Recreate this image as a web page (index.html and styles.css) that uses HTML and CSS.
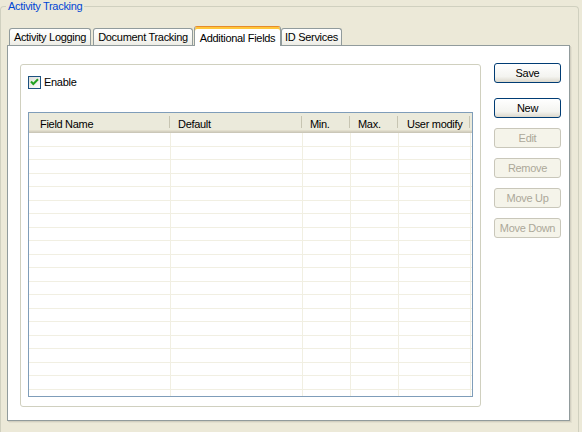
FILE: index.html
```html
<!DOCTYPE html>
<html>
<head>
<meta charset="utf-8">
<title>Activity Tracking</title>
<link rel="stylesheet" href="styles.css">
</head>
<body>
<div class="group">
  <span class="group-label">Activity Tracking</span>
  <div class="tabstrip">
    <div class="tab tab-al">Activity Logging</div>
    <div class="tab tab-dt">Document Tracking</div>
    <div class="tab tab-sel">Additional Fields</div>
    <div class="tab tab-id">ID Services</div>
  </div>
  <div class="panel">
    <div class="frame">
      <label class="check">
        <span class="box"><svg width="13" height="13" viewBox="0 0 13 13"><defs><linearGradient id="cb" x1="0" y1="0" x2="1" y2="1"><stop offset="0" stop-color="#DCDCD7"/><stop offset="1" stop-color="#FFFFFF"/></linearGradient></defs><rect x="0.5" y="0.5" width="12" height="12" fill="url(#cb)" stroke="#1C5180"/><polyline points="3,5.5 5.3,8 10,3.3" fill="none" stroke="#21A121" stroke-width="2"/></svg></span>
        <span>Enable</span>
      </label>
      <div class="list">
        <div class="lv-head">
          <div class="hc hc1">Field Name</div>
          <div class="hc">Default</div>
          <div class="hc">Min.</div>
          <div class="hc">Max.</div>
          <div class="hc hc5">User modify</div>
          <div class="hc-rest"></div>
        </div>
        <div class="lv-body">
          <div class="lv-row"><div></div><div></div><div></div><div></div><div></div><div></div></div>
          <div class="lv-row"><div></div><div></div><div></div><div></div><div></div><div></div></div>
          <div class="lv-row"><div></div><div></div><div></div><div></div><div></div><div></div></div>
          <div class="lv-row"><div></div><div></div><div></div><div></div><div></div><div></div></div>
          <div class="lv-row"><div></div><div></div><div></div><div></div><div></div><div></div></div>
          <div class="lv-row"><div></div><div></div><div></div><div></div><div></div><div></div></div>
          <div class="lv-row"><div></div><div></div><div></div><div></div><div></div><div></div></div>
          <div class="lv-row"><div></div><div></div><div></div><div></div><div></div><div></div></div>
          <div class="lv-row"><div></div><div></div><div></div><div></div><div></div><div></div></div>
          <div class="lv-row"><div></div><div></div><div></div><div></div><div></div><div></div></div>
          <div class="lv-row"><div></div><div></div><div></div><div></div><div></div><div></div></div>
          <div class="lv-row"><div></div><div></div><div></div><div></div><div></div><div></div></div>
          <div class="lv-row"><div></div><div></div><div></div><div></div><div></div><div></div></div>
          <div class="lv-row"><div></div><div></div><div></div><div></div><div></div><div></div></div>
          <div class="lv-row"><div></div><div></div><div></div><div></div><div></div><div></div></div>
          <div class="lv-row"><div></div><div></div><div></div><div></div><div></div><div></div></div>
          <div class="lv-row"><div></div><div></div><div></div><div></div><div></div><div></div></div>
          <div class="lv-row"><div></div><div></div><div></div><div></div><div></div><div></div></div>
          <div class="lv-row"><div></div><div></div><div></div><div></div><div></div><div></div></div>
          <div class="lv-row"><div></div><div></div><div></div><div></div><div></div><div></div></div>
          <div class="lv-row"><div></div><div></div><div></div><div></div><div></div><div></div></div>
        </div>
      </div>
    </div>
    <div class="buttons">
      <button class="btn btn-save">Save</button>
      <button class="btn btn-new">New</button>
      <button class="btn" disabled>Edit</button>
      <button class="btn" disabled>Remove</button>
      <button class="btn" disabled>Move Up</button>
      <button class="btn" disabled>Move Down</button>
    </div>
  </div>
</div>
</body>
</html>
```

FILE: styles.css
```css
* { box-sizing: border-box; }
html, body { margin: 0; padding: 0; }
body {
  width: 582px;
  height: 432px;
  overflow: hidden;
  background: #ECE9D8;
  font-family: "Liberation Sans", Arial, sans-serif;
  font-size: 11px;
  letter-spacing: -0.3px;
  color: #000;
}

.group {
  position: relative;
  margin-top: 6px;
  width: 579px;
  height: 440px;
  border: 1px solid #D0D0BF;
  border-bottom: none;
  border-radius: 4px 4px 0 0;
  padding-top: 19px;
}
.group-label {
  position: absolute;
  top: -7px;
  left: 5px;
  padding: 0 2px;
  background: #ECE9D8;
  color: #0046D5;
  line-height: 13px;
}

.tabstrip {
  display: flex;
  align-items: flex-end;
  height: 19px;
  padding-left: 8px;
  position: relative;
  z-index: 1;
}
.tab {
  height: 17px;
  border: 1px solid #919B9C;
  border-bottom: none;
  border-radius: 3px 3px 0 0;
  background: linear-gradient(#FFFFFF, #F7F7F3 60%, #EDECE5);
  text-align: center;
  line-height: 16px;
  white-space: nowrap;
}
.tab-al { width: 82px; }
.tab-dt { width: 100px; margin-left: 2px; }
.tab-sel {
  width: 87px;
  height: 20px;
  margin-left: 1px;
  margin-bottom: -1px;
  background: #FFFFFF;
  border-top: 1px solid #E68B2C;
  box-shadow: inset 0 2px 0 #FFC73C;
  padding-top: 3px;
}
.tab-id { width: 61px; }

.panel {
  margin-left: 6px;
  width: 563px;
  height: 376px;
  border: 1px solid #919B9C;
  background: #FFFFFF;
  box-shadow: 1px 1px 0 #D2CFC0, 2px 2px 0 #E2DFCF;
  display: flex;
  align-items: flex-start;
  padding: 18px 0 0 12px;
}

.frame {
  width: 461px;
  height: 343px;
  border: 1px solid #D0D0BF;
  border-radius: 3px;
  padding: 11px 0 0 7px;
}

.check {
  display: flex;
  align-items: center;
  gap: 3px;
  height: 13px;
  line-height: 13px;
}
.box { display: block; width: 13px; height: 13px; }
.box svg { display: block; }

.list {
  margin-top: 23px;
  width: 445px;
  height: 285px;
  border: 1px solid #7F9DB9;
  overflow: hidden;
  background: #FFFFFF;
}

.lv-head {
  display: grid;
  grid-template-columns: 142px 132px 48px 48px 72px 1fr;
  height: 20px;
  background: linear-gradient(to bottom,
    #EBEADB 0, #EBEADB 17px,
    #E2DECD 17px, #E2DECD 18px,
    #D6D2C2 18px, #D6D2C2 19px,
    #CBC7B8 19px, #CBC7B8 20px);
}
.hc {
  position: relative;
  padding: 2px 0 0 7px;
  line-height: 19px;
  white-space: nowrap;
}
.hc1 { padding-left: 11px; }
.hc5 { padding-left: 8px; }
.hc::after {
  content: "";
  position: absolute;
  right: 1px;
  top: 3px;
  width: 1px;
  height: 12px;
  background: #C7C5B2;
}

.lv-row {
  display: grid;
  grid-template-columns: 142px 132px 48px 48px 72px 1fr;
  height: 14px;
  border-bottom: 1px solid #F1EFE2;
}
.lv-row:nth-child(even) { height: 13px; }
.lv-row > div { border-right: 1px solid #F1EFE2; }
.lv-row > div:last-child { border-right: none; }

.buttons {
  display: flex;
  flex-direction: column;
  margin-left: 13px;
  margin-top: -1px;
}
.btn {
  width: 67px;
  height: 20px;
  margin: 10px 0 0 0;
  padding: 0;
  border: 1px solid #003C74;
  border-radius: 3px;
  background: linear-gradient(#FFFFFF, #F4F4F0 70%, #DCD8CC);
  font: inherit;
  letter-spacing: inherit;
  color: #000;
  line-height: 18px;
  text-align: center;
}
.btn-save { margin-top: 0; }
.btn-new { margin-top: 15px; }
.btn:disabled {
  border-color: #C9C7BA;
  background: #F5F4EA;
  color: #ACA899;
}
```
